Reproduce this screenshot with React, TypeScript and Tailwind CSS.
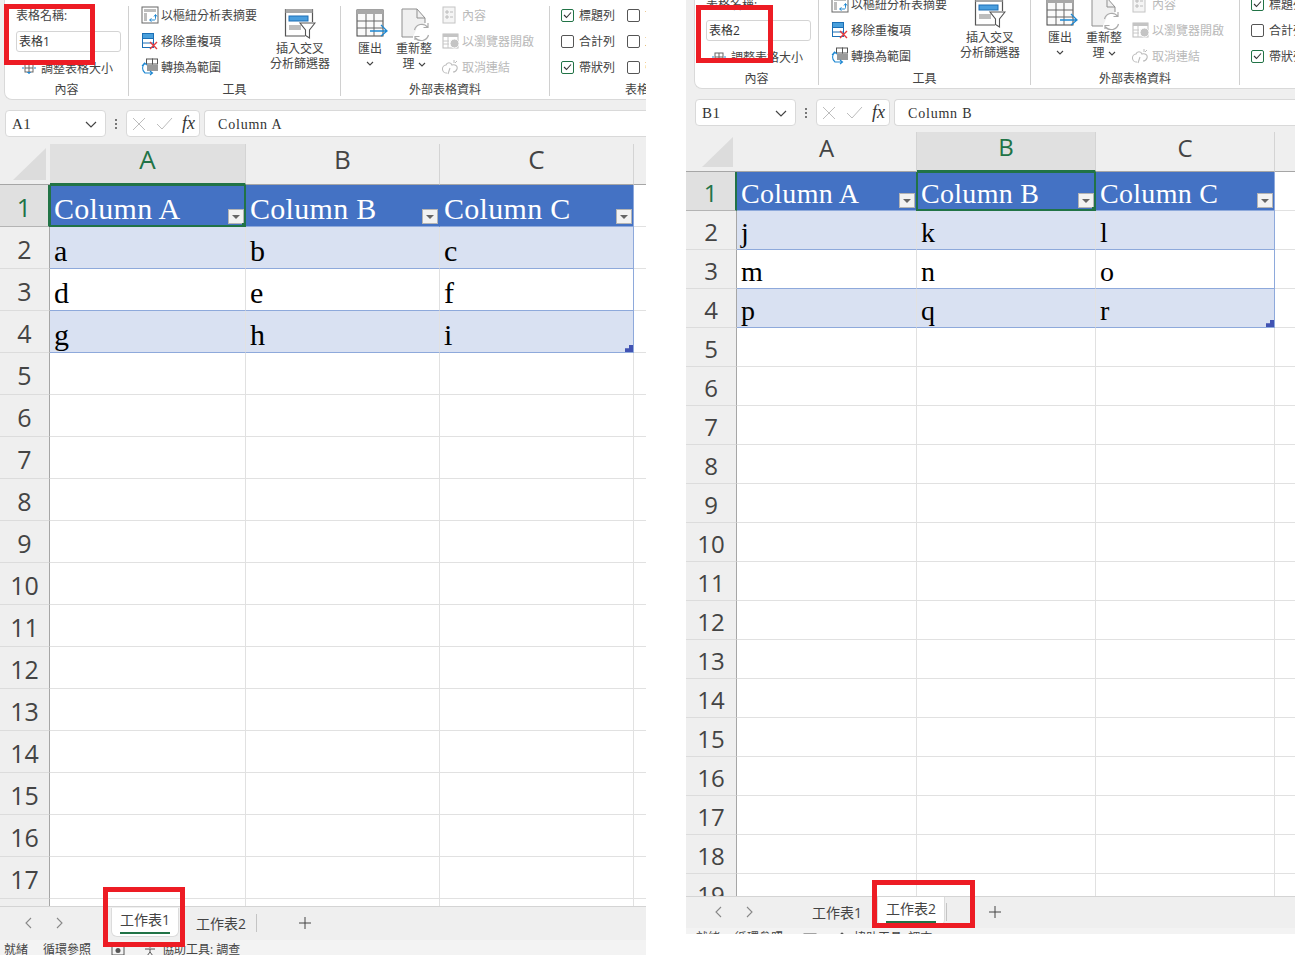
import React from "react";

const uiFont = "font-['Open_Sans','Noto_Sans_CJK_TC',sans-serif]";
const serif = "font-['Liberation_Serif','Noto_Sans_CJK_TC',serif]";

const Pivot = () => (
  <svg width="18" height="18" viewBox="0 0 18 18" fill="none">
    <rect x="1" y="1" width="16" height="16" fill="#fff" stroke="#666" />
    <rect x="3" y="3" width="12" height="3" fill="#bdbdbd" />
    <rect x="3" y="7" width="3" height="8" fill="#bdbdbd" />
    <path d="M9 14h4.500a1.500 1.500 0 0 0 1-1.500V9M13 10.500 14.500 8.500 16 10.500M10.500 12.500 8.500 14l2 1.500" stroke="#1e88d2" strokeWidth="1" />
  </svg>
);
const RemoveDup = () => (
  <svg width="18" height="18" viewBox="0 0 18 18" fill="none">
    <rect x="1.500" y="1.500" width="11" height="14" fill="#fff" stroke="#1c6fb5" />
    <rect x="1.500" y="1.500" width="11" height="5" fill="#4aa0dc" stroke="#1c6fb5" />
    <path d="M1.500 11h11" stroke="#1c6fb5" />
    <path d="M9 10l7 7M16 10l-7 7" stroke="#e8383c" strokeWidth="1.400" />
  </svg>
);
const Convert = () => (
  <svg width="18" height="18" viewBox="0 0 18 18" fill="none">
    <rect x="5.500" y="1" width="6" height="5" fill="#fff" stroke="#555" />
    <rect x="11.500" y="1" width="5" height="5" fill="#fff" stroke="#555" />
    <rect x="6" y="7" width="11" height="6" fill="#9a9a9a" />
    <path d="M4 5C1 8 0.500 12 4 15h7M9 13l2.500 2L9 17M1 8l2.500-3L6 7" stroke="#1e88d2" strokeWidth="1.100" />
  </svg>
);
const Slicer = () => (
  <svg width="32" height="31" viewBox="0 0 32 31" fill="none">
    <path d="M21 28H1.500V1.500h27V14" stroke="#555" strokeWidth="1.200" fill="#fff" />
    <rect x="1.500" y="1" width="27" height="4" fill="#a8a8a8" />
    <rect x="5" y="8" width="19" height="5" fill="#4a9ede" stroke="#1c6fb5" />
    <rect x="5" y="17" width="12" height="5" fill="#bdbdbd" />
    <path d="M16 15h15l-5.500 7v8l-4-2.500V22z" fill="#fff" stroke="#555" strokeWidth="1.100" />
  </svg>
);
const ExportIcon = () => (
  <svg className="ml-[4px]" width="32" height="28" viewBox="0 0 32 28" fill="none">
    <rect x="1" y="1" width="26" height="26" fill="#fafafa" stroke="#444" />
    <rect x="1" y="1" width="26" height="4" fill="#a8a8a8" />
    <path d="M1 12h26M1 19h26M10 5v22M18 5v22" stroke="#666" />
    <path d="M14 22h16M25 16l6 6-6 5" stroke="#1e88d2" strokeWidth="1.300" fill="none" />
  </svg>
);
const RefreshIcon = () => (
  <svg className="ml-[4px]" width="30" height="33" viewBox="0 0 30 33" fill="none">
    <path d="M1 1h15l8 9v7h-7l-5 12H1z" fill="#f0f0f0" />
    <path d="M1 29V1h15l8 9v5M16 1v9h8M1 29h11" stroke="#8f8f8f" />
    <path d="M13.500 22a7.500 7.500 0 0 1 13-3M27.500 27a7.500 7.500 0 0 1-13 3M27 15v4.500h-4.500M14 32v-3.500h4.500" stroke="#aaa" strokeWidth="1.200" />
  </svg>
);
const PropsIcon = () => (
  <svg width="16" height="18" viewBox="0 0 16 18" fill="none">
    <rect x="1" y="1" width="12" height="16" fill="#f5f5f5" stroke="#c4c4c4" />
    <path d="M4 5h2v2H4zM4 10h2v2H4zM8 6h3M8 11h3" stroke="#bbb" />
  </svg>
);
const BrowserIcon = () => (
  <svg width="18" height="16" viewBox="0 0 18 16" fill="none">
    <rect x="1" y="1" width="15" height="14" fill="#fff" stroke="#bbb" />
    <rect x="1" y="1" width="15" height="3" fill="#c4c4c4" />
    <path d="M1 8h6M1 11h6M6 4v11" stroke="#c8c8c8" />
    <circle cx="12.500" cy="10.500" r="4.500" fill="#c4c4c4" stroke="#fff" />
  </svg>
);
const UnlinkIcon = () => (
  <svg width="18" height="16" viewBox="0 0 18 16" fill="none">
    <path d="M5 14a4 4 0 0 1-1-8c1-3 5-3 6 0 3-1 6 1 5 4s-3 3-4 3M8 9l-2 6" stroke="#bcbcbc" strokeWidth="1.100" />
    <path d="M12 1v3M15 2l-2 2" stroke="#bcbcbc" />
  </svg>
);
const ResizeIcon = () => (
  <svg width="14" height="14" viewBox="0 0 14 14" fill="none">
    <rect x="3" y="3" width="8" height="8" fill="#fff" stroke="#666" />
    <path d="M7 3v8M3 7h8" stroke="#666" />
    <path d="M0 7h2M12 7h2M7 12.500 5.500 11.500h3z" stroke="#1e88d2" />
  </svg>
);
const Chevron = ({ cls = "" }: { cls?: string }) => (
  <svg className={cls} width="8" height="5" viewBox="0 0 8 5" fill="none">
    <path d="M1 1l3 3 3-3" stroke="#444" strokeWidth="1.100" />
  </svg>
);

const Check = ({ on }: { on?: boolean }) => (
  <span className={`flex w-[13px] h-[13px] items-center justify-center rounded-[2px] border bg-white shrink-0 ${on ? "border-[#217346]" : "border-[#555]"}`}>
    {on && (
      <svg width="9" height="8" viewBox="0 0 9 8" fill="none">
        <path d="M1 4l2.500 2.500L8 1.500" stroke="#333" strokeWidth="1.100" />
      </svg>
    )}
  </span>
);

const RowItem = ({ icon, text, gray }: { icon: React.ReactNode; text: string; gray?: boolean }) => (
  <div className={`flex h-[26px] items-center whitespace-nowrap ${gray ? "text-[#b9b9b9]" : "text-[#444]"}`}>
    <span className="flex w-[20px] shrink-0 items-center">{icon}</span>
    <span>{text}</span>
  </div>
);

const CheckRow = ({ on, text }: { on?: boolean; text: string }) => (
  <div className="flex h-[26px] items-center gap-[5px] whitespace-nowrap text-[#444]">
    <Check on={on} />
    <span>{text}</span>
  </div>
);

const Group = ({ label, w, children }: { label: string; w: string; children: React.ReactNode }) => (
  <div className={`flex flex-col shrink-0 ${w}`}>
    <div className="flex h-[79px]">{children}</div>
    <div className="h-[18px] text-center leading-[18px] text-[#444]">{label}</div>
  </div>
);

const Divider = () => <div className="my-1 h-[90px] w-px shrink-0 bg-[#d0d0d0]" />;

const Ribbon = ({ name }: { name: string }) => (
  <div className={`h-[100px] shrink-0 overflow-hidden rounded-bl-lg border-b border-l border-[#d9d9d9] bg-white pt-[2px] text-[12px] leading-[15px] ${uiFont}`}>
    <div className="flex">
      <Group label="內容" w="w-[123px]">
        <div className="flex flex-col pl-[11px]">
          <div className="flex h-[26px] items-center text-[#444]">表格名稱:</div>
          <div className="mt-[3px] mb-[3px] flex h-[21px] w-[105px] items-center rounded-[3px] border border-[#d4d4d4] px-[2px] text-[#333]">{name}</div>
          <div className="flex h-[26px] items-center pl-[6px] text-[#444]">
            <span className="mr-[5px]"><ResizeIcon /></span>調整表格大小
          </div>
        </div>
      </Group>
      <Divider />
      <Group label="工具" w="w-[211px]">
        <div className="flex w-[141px] flex-col pl-[12px] shrink-0">
          <RowItem icon={<Pivot />} text="以樞紐分析表摘要" />
          <RowItem icon={<RemoveDup />} text="移除重複項" />
          <RowItem icon={<Convert />} text="轉換為範圍" />
        </div>
        <div className="flex w-[60px] flex-col items-center pt-[6px] text-[#444]">
          <Slicer />
          <div className="mt-[2px] text-center whitespace-nowrap">插入交叉</div>
          <div className="text-center whitespace-nowrap">分析篩選器</div>
        </div>
      </Group>
      <Divider />
      <Group label="外部表格資料" w="w-[208px]">
        <div className="ml-[11px] flex w-[36px] flex-col items-center pt-[7px] text-[#444]">
          <ExportIcon />
          <div className="mt-[4px]">匯出</div>
          <Chevron cls="mt-[5px]" />
        </div>
        <div className="ml-[7px] flex w-[38px] flex-col items-center pt-[6px] text-[#444]">
          <RefreshIcon />
          <div className="whitespace-nowrap">重新整</div>
          <div className="flex items-center gap-[3px] leading-[16px]">理<Chevron /></div>
        </div>
        <div className="ml-[9px] flex flex-col">
          <RowItem gray icon={<PropsIcon />} text="內容" />
          <RowItem gray icon={<BrowserIcon />} text="以瀏覽器開啟" />
          <RowItem gray icon={<UnlinkIcon />} text="取消連結" />
        </div>
      </Group>
      <Divider />
      <Group label="表格樣式選項" w="w-[222px]">
        <div className="ml-[11px] flex w-[66px] shrink-0 flex-col">
          <CheckRow on text="標題列" />
          <CheckRow text="合計列" />
          <CheckRow on text="帶狀列" />
        </div>
        <div className="flex flex-col">
          <CheckRow text="首欄" />
          <CheckRow text="末欄" />
          <CheckRow text="帶狀欄" />
        </div>
      </Group>
    </div>
  </div>
);

const FormulaBar = ({ cell, value, pl }: { cell: string; value: string; pl: string }) => (
  <div className={`flex h-[27px] shrink-0 overflow-hidden text-[#333] ${pl} ${serif}`}>
    <div className="flex h-[27px] w-[101px] shrink-0 items-center justify-between rounded-[4px] border border-[#d9d9d9] bg-white pl-[6px] pr-[8px] pt-[2px] text-[15px] tracking-[0.5px]">
      {cell}
      <svg width="12" height="7" viewBox="0 0 12 7" fill="none"><path d="M1 1l5 5 5-5" stroke="#444" strokeWidth="1.200" /></svg>
    </div>
    <div className="flex w-[20px] shrink-0 flex-col items-center justify-center gap-[2px]">
      <span className="h-[2px] w-[2px] bg-[#777]" /><span className="h-[2px] w-[2px] bg-[#777]" /><span className="h-[2px] w-[2px] bg-[#777]" />
    </div>
    <div className="flex h-[27px] w-[74px] shrink-0 items-center justify-between rounded-[4px] border border-[#d9d9d9] bg-white pl-[5px] pr-[4px]">
      <svg width="14" height="14" viewBox="0 0 14 14" fill="none"><path d="M1 1l12 12M13 1L1 13" stroke="#bdbdbd" /></svg>
      <svg width="17" height="13" viewBox="0 0 17 13" fill="none"><path d="M1 7l5 5L16 1" stroke="#bdbdbd" /></svg>
      <span className="text-[18px] italic text-[#333]">fx</span>
    </div>
    <div className="ml-[4px] flex h-[27px] flex-1 items-center rounded-l-[4px] border-y border-l border-[#d9d9d9] bg-white pl-[13px] pt-[2px] text-[14px] tracking-[0.8px]">
      {value}
    </div>
  </div>
);

type Cfg = {
  rowH: string; rowHead: string; cols: string[]; headText: string; rowText: string; cellText: string;
  headRowH: string; corner: string;
};

const Filter = () => (
  <span className="absolute bottom-[2px] right-[1px] flex h-[15px] w-[16px] items-center justify-center border border-[#b4b4b4] bg-[#f2f2f2]">
    <span className="h-0 w-0 border-x-[4px] border-t-[4px] border-x-transparent border-t-[#666]" />
  </span>
);

const Sheet = ({ cfg, sel, data, count }: { cfg: Cfg; sel: number; data: string[][]; count: number }) => {
  const letters = ["A", "B", "C"];
  const rows = Array.from({ length: count }, (_, i) => i + 1);
  return (
    <>
      <div className={`flex shrink-0 ${cfg.headRowH} ${uiFont}`}>
        <div className={`${cfg.rowHead} flex shrink-0 items-end justify-end pr-[4px] pb-[4px] border-b border-[#a6a6a6]`}>
          <div className={`${cfg.corner} bg-[#dcdcdc] [clip-path:polygon(100%_0,100%_100%,0_100%)]`} />
        </div>
        {letters.map((l, i) => (
          <div key={l} className={`${cfg.cols[i]} flex shrink-0 items-center justify-center border-r border-b border-r-[#d4d4d4] ${cfg.headText} ${i === sel ? "bg-[#e0e0e0] text-[#217346] border-b-2 border-b-[#217346]" : "text-[#444] border-b-[#a6a6a6]"}`}>{l}</div>
        ))}
        <div className="flex-1 border-b border-[#a6a6a6]" />
      </div>
      <div className="min-h-0 flex-1 overflow-hidden bg-white">
        {rows.map((r) => {
          const cells = r === 1 ? ["Column A", "Column B", "Column C"] : data[r - 2];
          return (
            <div key={r} className={`flex ${cfg.rowH}`}>
              <div className={`${cfg.rowHead} flex shrink-0 items-center justify-center border-r border-b ${cfg.rowText} ${uiFont} ${r === 1 ? "bg-[#e0e0e0] text-[#217346] border-r-2 border-r-[#217346] border-b-[#b4b4b4]" : "bg-[#efefef] text-[#444] border-r-[#a6a6a6] border-b-[#dcdcdc]"}`}>{r}</div>
              {letters.map((_, c) => {
                const band = r === 2 || r === 4;
                const inTable = r <= 4;
                const bg = r === 1 ? "bg-[#4472c4] text-white" : band ? "bg-[#d9e1f2] text-black" : "bg-white text-black";
                const border = inTable
                  ? `border-b border-b-[#8ea9db] ${c === 2 ? "border-r border-r-[#8ea9db]" : r === 1 ? "border-r border-r-[#4472c4]" : "border-r border-r-[#e1e1e1]"}`
                  : "border-b border-r border-[#e1e1e1]";
                return (
                  <div key={c} className={`${cfg.cols[c]} relative flex shrink-0 items-end overflow-visible pl-[4px] ${cfg.cellText} ${serif} ${bg} ${border}`}>
                    <span className="tracking-[0.3px]">{cells ? cells[c] : ""}</span>
                    {r === 1 && <Filter />}
                    {r === 1 && c === sel && (
                      <span className="absolute -left-px -top-px -bottom-px -right-px border-2 border-[#217346]">
                        <span className="absolute -bottom-[3px] -right-[3px] h-[5px] w-[5px] bg-[#217346]" />
                      </span>
                    )}
                    {r === 4 && c === 2 && (
                      <span className="absolute bottom-0 right-0 h-[7px] w-[8px] bg-[#4153b3] [clip-path:polygon(50%_0,100%_0,100%_100%,0_100%,0_45%,50%_45%)]" />
                    )}
                  </div>
                );
              })}
              <div className="flex-1 border-b border-[#e1e1e1]" />
            </div>
          );
        })}
      </div>
    </>
  );
};

const Nav = ({ pl }: { pl: string }) => (
  <div className={`flex shrink-0 ${pl}`}>
    <span className="flex w-[32px] justify-center">
      <svg width="8" height="12" viewBox="0 0 8 12" fill="none"><path d="M7 1L2 6l5 5" stroke="#888" strokeWidth="1.100" /></svg>
    </span>
    <span className="flex w-[32px] justify-center">
      <svg width="8" height="12" viewBox="0 0 8 12" fill="none"><path d="M1 1l5 5-5 5" stroke="#888" strokeWidth="1.100" /></svg>
    </span>
  </div>
);

const ActiveTab = ({ label }: { label: string }) => (
  <div className="flex h-[29px] w-[68px] shrink-0 flex-col items-center self-start rounded-b-md border-x border-b border-[#dcdcdc] bg-white pt-[2px]">
    <span className="leading-[20px]">{label}</span>
    <span className="mt-[2px] h-[2px] w-[50px] bg-[#217346]" />
  </div>
);

const Plus = ({ ml }: { ml: string }) => (
  <svg className={ml} width="12" height="12" viewBox="0 0 12 12" fill="none"><path d="M6 0v12M0 6h12" stroke="#444" /></svg>
);

const StatusBar = ({ pl, h }: { pl: string; h: string }) => (
  <div className={`flex shrink-0 items-start overflow-hidden bg-[#f3f3f3] pt-[4px] text-[12px] leading-[12px] text-[#444] ${pl} ${h} ${uiFont}`}>
    <span>就緒</span>
    <span className="ml-[15px]">循環參照</span>
    <svg className="ml-[20px]" width="14" height="12" viewBox="0 0 14 12" fill="none">
      <rect x="1" y="2" width="12" height="9" stroke="#555" />
      <circle cx="7" cy="6.500" r="2.500" fill="#555" />
    </svg>
    <svg className="ml-[18px]" width="14" height="12" viewBox="0 0 14 12" fill="none">
      <circle cx="7" cy="2" r="1.500" fill="#555" />
      <path d="M2 5h10M7 5v3l-3 4M7 8l3 4" stroke="#555" />
    </svg>
    <span className="ml-[5px]">協助工具: 調查</span>
  </div>
);

const Red = ({ cls }: { cls: string }) => <div className={`absolute border-[5px] border-[#ed1c24] ${cls}`} />;

const leftCfg: Cfg = {
  rowH: "h-[42px]",
  rowHead: "w-[50px]",
  cols: ["w-[196px]", "w-[194px]", "w-[194px]"],
  headText: "text-[26px] pb-[9px]",
  rowText: "text-[25px] pt-[4px]",
  cellText: "text-[30px] leading-[34px]",
  headRowH: "h-[41px]",
  corner: "w-[33px] h-[32px]",
};
const rightCfg: Cfg = {
  rowH: "h-[39px]",
  rowHead: "w-[51px]",
  cols: ["w-[180px]", "w-[179px]", "w-[179px]"],
  headText: "text-[24px] pb-[8px]",
  rowText: "text-[24px] pt-[4px]",
  cellText: "text-[28px] leading-[33px]",
  headRowH: "h-[40px]",
  corner: "w-[31px] h-[30px]",
};

export default function App() {
  return (
    <div className="flex h-[955px] w-[1299px] items-start overflow-hidden bg-white">
      {/* left */}
      <div className="relative flex h-[955px] w-[646px] shrink-0 flex-col bg-[#efefef]">
        <div className="ml-1 shrink-0"><Ribbon name="表格1" /></div>
        <div className="mt-[10px]"><FormulaBar cell="A1" value="Column A" pl="pl-[5px]" /></div>
        <div className="mt-[7px] flex min-h-0 flex-1 flex-col">
          <Sheet cfg={leftCfg} sel={0} count={18} data={[["a", "b", "c"], ["d", "e", "f"], ["g", "h", "i"]]} />
        </div>
        <div className={`flex h-[34px] shrink-0 items-center border-t border-[#d4d4d4] bg-[#efefef] pb-[2px] text-[14px] text-[#444] ${uiFont}`}>
          <Nav pl="pl-[12px]" />
          <div className="ml-[35px]"><ActiveTab label="工作表1" /></div>
          <span className="ml-[17px] translate-y-[1px]">工作表2</span>
          <span className="ml-[10px] h-[18px] w-px bg-[#c4c4c4]" />
          <Plus ml="ml-[42px]" />
        </div>
        <StatusBar pl="pl-[4px]" h="h-[15px]" />
        <Red cls="left-[4px] top-[4px] h-[61px] w-[91px]" />
        <Red cls="left-[103px] top-[887px] h-[60px] w-[82px]" />
      </div>
      {/* right */}
      <div className="relative ml-[40px] flex h-[934px] w-[609px] shrink-0 flex-col bg-[#efefef]">
        <div className="ml-2 flex h-[89px] shrink-0 flex-col justify-end overflow-hidden"><Ribbon name="表格2" /></div>
        <div className="mt-[10px]"><FormulaBar cell="B1" value="Column B" pl="pl-[9px]" /></div>
        <div className="mt-[6px] flex min-h-0 flex-1 flex-col">
          <Sheet cfg={rightCfg} sel={1} count={19} data={[["j", "k", "l"], ["m", "n", "o"], ["p", "q", "r"]]} />
        </div>
        <div className={`flex h-[32px] shrink-0 items-center border-t border-[#d4d4d4] bg-[#efefef] pb-[1px] text-[14px] text-[#444] ${uiFont}`}>
          <Nav pl="pl-[16px]" />
          <span className="ml-[46px]">工作表1</span>
          <div className="ml-[15px] self-start"><ActiveTab label="工作表2" /></div>
          <span className="ml-[1px] h-[18px] w-px bg-[#c4c4c4]" />
          <Plus ml="ml-[42px]" />
        </div>
        <StatusBar pl="pl-[10px]" h="h-[6px]" />
        <Red cls="left-[10px] top-[5px] h-[58px] w-[77px]" />
        <Red cls="left-[186px] top-[880px] h-[48px] w-[103px]" />
      </div>
    </div>
  );
}
